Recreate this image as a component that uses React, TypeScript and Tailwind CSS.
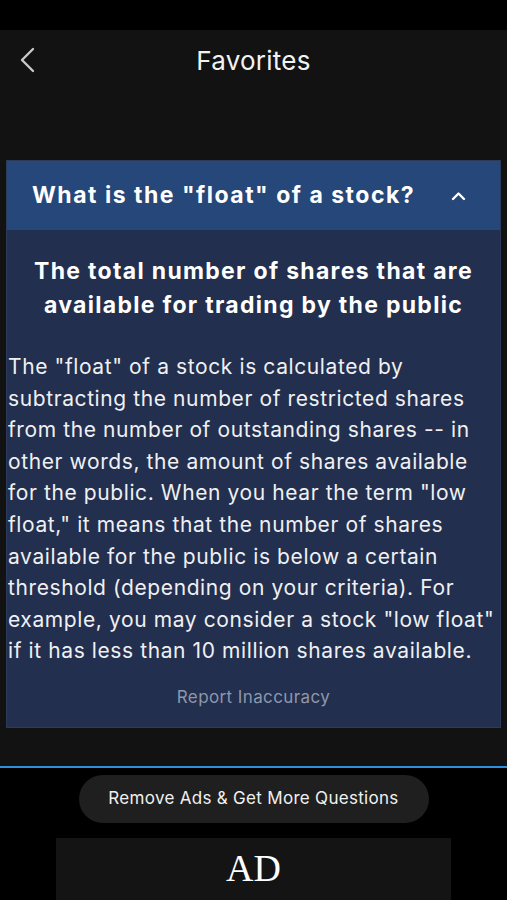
const BODY =
  'The "float" of a stock is calculated by subtracting the number of restricted shares from the number of outstanding shares -- in other words, the amount of shares available for the public. When you hear the term "low float," it means that the number of shares available for the public is below a certain threshold (depending on your criteria). For example, you may consider a stock "low float" if it has less than 10 million shares available.';

export default function App() {
  return (
    <div className="flex h-[900px] w-[507px] flex-col overflow-hidden bg-black font-['Inter',sans-serif] text-white">
      <div className="h-[30px] shrink-0 bg-black" />

      <div className="flex h-[736px] shrink-0 flex-col bg-[#121212]">
        {/* Nav */}
        <div className="relative flex h-[60px] items-center justify-center">
          <svg
            className="absolute left-[19px] top-[17px]"
            width="17"
            height="26"
            viewBox="0 0 17 26"
            fill="none"
            stroke="#c9c9c9"
            strokeWidth="2.4"
            strokeLinecap="round"
            strokeLinejoin="round"
          >
            <polyline points="14,2 3,13 14,24" />
          </svg>
          <span className="text-[26px] tracking-[0.25px] text-[#f2f2f2]">Favorites</span>
        </div>

        {/* Card */}
        <div className="mx-[6px] mt-[70px] border border-[#2c3b5a] bg-[#222f4e]">
          <div className="flex h-[69px] items-center justify-between bg-[#25477a] pl-[25px] pr-[34px]">
            <span className="text-[23px] font-bold tracking-[1.5px] text-white">
              What is the "float" of a stock?
            </span>
            <svg
              width="15"
              height="10"
              viewBox="0 0 15 10"
              fill="none"
              stroke="white"
              strokeWidth="2.4"
              strokeLinecap="round"
              strokeLinejoin="round"
            >
              <polyline points="2,8 7.5,2.5 13,8" />
            </svg>
          </div>
          <div className="flex flex-col">
            <p className="mt-[24px] px-[10px] text-center text-[23px] font-bold leading-[34px] tracking-[1.3px]">
              The total number of shares that are available for trading by the public
            </p>
            <p className="mt-[29px] pl-[1px] pr-[2px] text-[21px] leading-[31.6px] tracking-[0.6px] text-[#f0f0f2]">
              {BODY}
            </p>
            <p className="mb-[17px] mt-[18px] text-center text-[17px] tracking-[0.4px] text-[#8e97ab]">
              Report Inaccuracy
            </p>
          </div>
        </div>
      </div>

      <div className="h-[2px] shrink-0 bg-[#2d8fe0]" />

      <div className="flex flex-1 flex-col items-center bg-black">
        <button className="mt-[7px] flex h-[48px] w-[350px] items-center justify-center rounded-full bg-[#1f1f1f] text-[17px] tracking-[0.3px] text-[#f0f0f0]">
          Remove Ads &amp; Get More Questions
        </button>
        <div className="mt-[15px] flex h-[70px] w-[395px] items-start justify-center bg-[#141414] pt-[8px] font-['Liberation_Serif',serif] text-[38px] leading-[44px] text-white">
          AD
        </div>
      </div>
    </div>
  );
}
